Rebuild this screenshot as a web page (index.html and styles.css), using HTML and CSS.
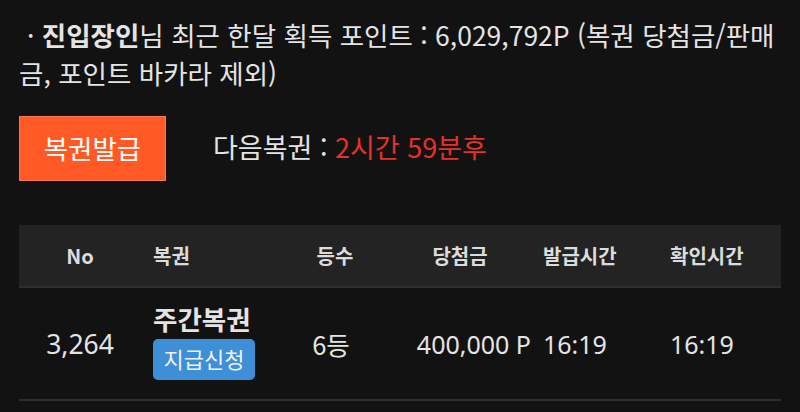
FILE: index.html
```html
<!DOCTYPE html>
<html lang="ko">
<head>
<meta charset="utf-8">
<link rel="stylesheet" href="styles.css">
</head>
<body>
<div class="page">
  <p class="info">· <b>진입장인</b>님 최근 한달 획득 포인트 : 6,029,792P (복권 당첨금/판매금, 포인트 바카라 제외)</p>
  <div class="issue">
    <button class="btn-issue">복권발급</button>
    <div class="next">다음복권 : <span class="red">2시간 59분후</span></div>
  </div>
  <div class="table">
    <div class="row head">
      <div class="c1">No</div>
      <div class="c2">복권</div>
      <div class="c3">등수</div>
      <div class="c4">당첨금</div>
      <div class="c5">발급시간</div>
      <div class="c6">확인시간</div>
    </div>
    <div class="row body">
      <div class="c1 num">3,264</div>
      <div class="c2 lotto">
        <div class="lname">주간복권</div>
        <span class="claim">지급신청</span>
      </div>
      <div class="c3 rank">6등</div>
      <div class="c4 prize num">400,000 P</div>
      <div class="c5 num">16:19</div>
      <div class="c6 num">16:19</div>
    </div>
  </div>
</div>
</body>
</html>
```
FILE: styles.css
```css
html, body {
  margin: 0;
  padding: 0;
  background: #121212;
}
body {
  font-family: "Noto Sans CJK KR", "Noto Sans", sans-serif;
  color: #e4e4e4;
}
.page {
  padding: 16px 19px 0 19px;
}
.info {
  margin: 0;
  font-size: 26.5px;
  line-height: 38px;
  text-indent: 8px;
}
.info b {
  font-weight: 700;
}
.issue {
  display: flex;
  align-items: center;
  margin-top: 24px;
}
.btn-issue {
  width: 147px;
  height: 65px;
  background: #ff5a26;
  border: 1px solid #f57a50;
  color: #fff;
  font-family: inherit;
  font-size: 26.5px;
  padding: 0 0 3px 0;
  box-sizing: border-box;
}
.next {
  margin-left: 47px;
  font-size: 27px;
  margin-top: -4px;
}
.red {
  color: #e8302a;
}
.table {
  margin-top: 44px;
  width: 762px;
}
.row {
  display: grid;
  grid-template-columns: 122px 149px 90px 160px 126px 115px;
  align-items: center;
}
.head {
  height: 61px;
  background: #232323;
  border-bottom: 2px solid #2f2f2f;
  font-size: 20px;
  font-weight: 700;
  color: #dcdcdc;
}
.body {
  height: 111px;
  border-bottom: 2px solid #303030;
  font-size: 25.5px;
}
.num {
  font-family: "Noto Sans", "Noto Sans CJK KR", sans-serif;
  font-size: 25px;
}
.c1 { text-align: center; }
.c1.num { font-size: 26.5px; }
.c2 { padding-left: 12px; }
.c3 { text-align: center; }
.c4 { text-align: center; }
.c5 { padding-left: 3px; }
.c6 { padding-left: 4px; }
.rank { padding-right: 8px; }
.prize { text-align: right; padding-right: 9px; }
.lotto {
  display: flex;
  flex-direction: column;
  align-items: flex-start;
}
.lname {
  font-size: 26.5px;
  font-weight: 700;
  line-height: 30px;
  margin-top: -4px;
}
.claim {
  margin-top: 5px;
  width: 102px;
  height: 41px;
  background: #3d8fd8;
  border-radius: 5px;
  color: #f2f2f2;
  font-size: 22px;
  line-height: 39px;
  text-align: center;
}
```
